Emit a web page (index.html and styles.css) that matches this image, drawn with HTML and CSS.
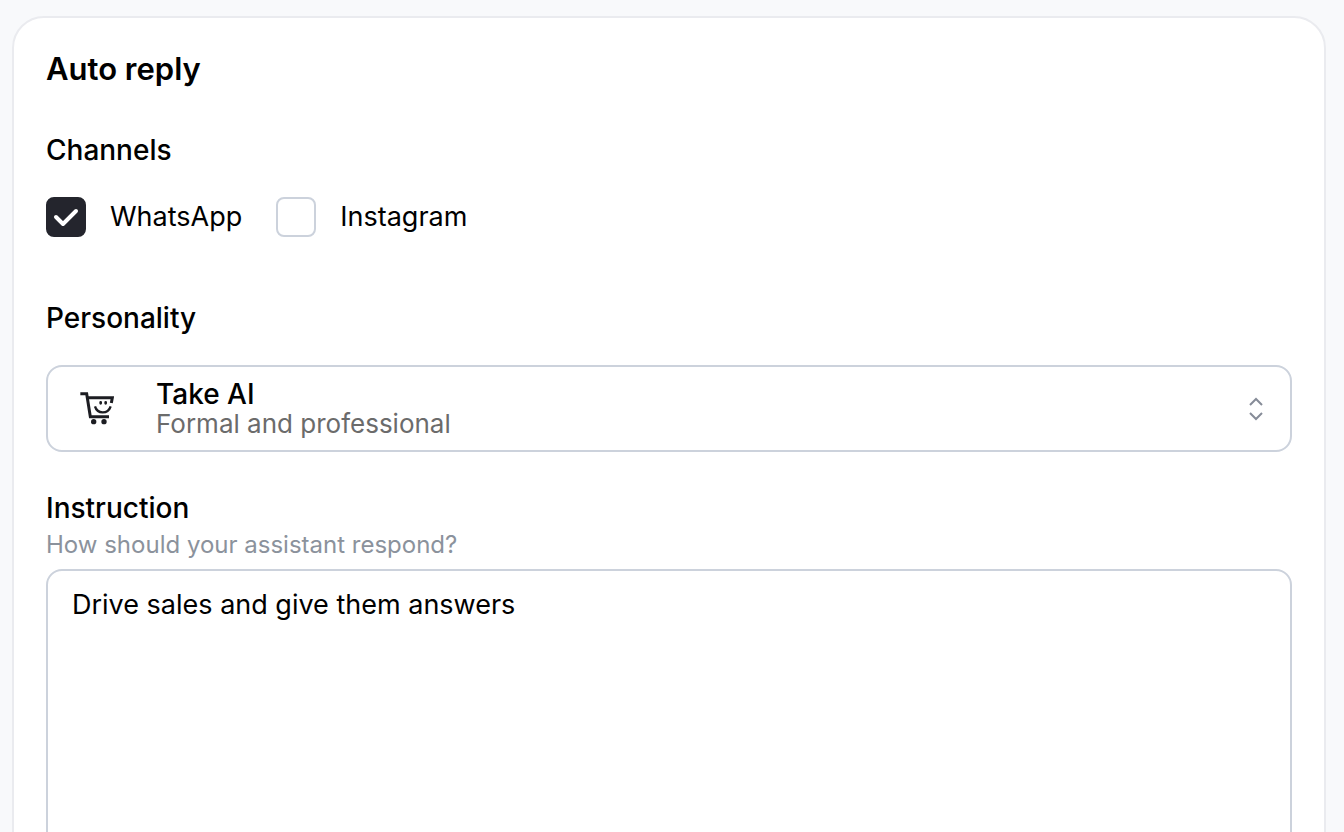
FILE: index.html
```html
<!DOCTYPE html>
<html lang="en">
<head>
  <meta charset="UTF-8">
  <meta name="viewport" content="width=device-width, initial-scale=1.0">
  <title>Auto reply</title>
  <link rel="stylesheet" href="styles.css">
</head>
<body>
  <main class="card">
    <h1>Auto reply</h1>
    <form>
      <fieldset class="channels">
        <legend>Channels</legend>
        <div class="options">
          <label class="option">
            <input type="checkbox" name="channel" value="whatsapp" checked>
            <svg class="tick" viewBox="0 0 40 40" aria-hidden="true"><path d="M10 20L17 27L30 14"/></svg>
            <span>WhatsApp</span>
          </label>
          <label class="option">
            <input type="checkbox" name="channel" value="instagram">
            <svg class="tick" viewBox="0 0 40 40" aria-hidden="true"><path d="M10 20L17 27L30 14"/></svg>
            <span>Instagram</span>
          </label>
        </div>
      </fieldset>

      <div class="field personality">
        <label for="personality">Personality</label>
        <div class="select">
          <select id="personality" name="personality" aria-describedby="personalityInfo">
            <option>Take AI</option>
          </select>
          <svg class="cart" viewBox="24 36 108 108" aria-hidden="true">
            <g fill="none" stroke="#1c1d22" stroke-width="9">
              <path d="M31 44H50L61 113H117"/>
              <path d="M53 56H127L124 72"/>
              <path d="M75 82C82 106 114 106 122 82" stroke-width="7"/>
              <path d="M92 70V73M107 70V73" stroke-width="8" stroke-linecap="round"/>
            </g>
            <circle cx="71" cy="128" r="8" fill="#1c1d22"/>
            <circle cx="102" cy="128" r="8" fill="#1c1d22"/>
          </svg>
          <span class="info" id="personalityInfo">Formal and professional</span>
          <svg class="arrows" viewBox="0 0 16 24" aria-hidden="true">
            <path d="M2 8L8 2L14 8M2 16L8 22L14 16"/>
          </svg>
        </div>
      </div>

      <div class="field">
        <label for="instruction">Instruction</label>
        <p class="hint" id="instructionHint">How should your assistant respond?</p>
        <textarea id="instruction" name="instruction" rows="10" aria-describedby="instructionHint">Drive sales and give them answers</textarea>
      </div>
    </form>
  </main>
</body>
</html>
```
FILE: styles.css
```css
* {
  box-sizing: border-box;
}
body {
  margin: 0;
  height: 100vh;
  padding: 16px 18px 0 12px;
  overflow: hidden;
  background: #f8f9fb;
  color: #000;
  font: 28px/36px Inter, sans-serif;
}
.card {
  padding: 31px 32px;
  background: #fff;
  border: 2px solid #eaebef;
  border-radius: 32px;
}
h1 {
  margin: 0 0 43px;
  font-size: 31px;
  line-height: 40px;
  font-weight: 600;
}
.channels {
  margin: 0 0 63px;
  padding: 0;
  border: 0;
}
legend,
.field label {
  display: block;
  padding: 0;
  font-weight: 500;
}
.options {
  display: flex;
  gap: 34px;
  margin-top: 29px;
  font-size: 27px;
}
.option {
  display: grid;
  grid-template-columns: 40px auto;
  align-items: center;
  column-gap: 24px;
}
.option input {
  grid-area: 1 / 1;
  appearance: none;
  width: 40px;
  height: 40px;
  margin: 0;
  border: 2px solid #ccd2dc;
  border-radius: 8px;
  background: #fff;
}
.option input:checked {
  border-color: #24252d;
  background: #24252d;
}
.tick {
  grid-area: 1 / 1;
  display: none;
  width: 40px;
  height: 40px;
  fill: none;
  stroke: #fff;
  stroke-width: 4;
  stroke-linecap: round;
  stroke-linejoin: round;
}
.option input:checked + .tick {
  display: block;
}
.personality {
  margin-bottom: 38px;
}
.select {
  display: grid;
  grid-template-columns: 108px 1fr 44px;
  align-items: center;
  margin-top: 29px;
}
/* icon, description and arrows share the grid row with the select */
.select > * {
  grid-row: 1;
  pointer-events: none;
}
.select select {
  grid-column: 1 / -1;
  appearance: none;
  width: 100%;
  height: 87px;
  padding: 9px 44px 38px 108px;
  border: 2px solid #ccd2dc;
  border-radius: 16px;
  background: #fff;
  color: #000;
  font: inherit;
  font-weight: 500;
  pointer-events: auto;
}
.cart {
  grid-column: 1;
  width: 36px;
  height: 36px;
  margin-left: 32px;
}
.info {
  grid-column: 2;
  align-self: end;
  margin: 0 0 12px 2px;
  font-size: 26px;
  line-height: 32px;
  color: #6b6b6b;
}
.arrows {
  grid-column: 3;
  width: 16px;
  height: 24px;
  fill: none;
  stroke: #868c98;
  stroke-width: 2;
}
.hint {
  margin: 3px 0 8px;
  font-size: 24px;
  line-height: 32px;
  color: #8b929c;
}
textarea {
  display: block;
  width: 100%;
  padding: 16px 24px;
  border: 2px solid #ccd2dc;
  border-radius: 16px;
  background: #fff;
  color: #000;
  font: inherit;
  font-size: 27px;
  resize: none;
}
```
